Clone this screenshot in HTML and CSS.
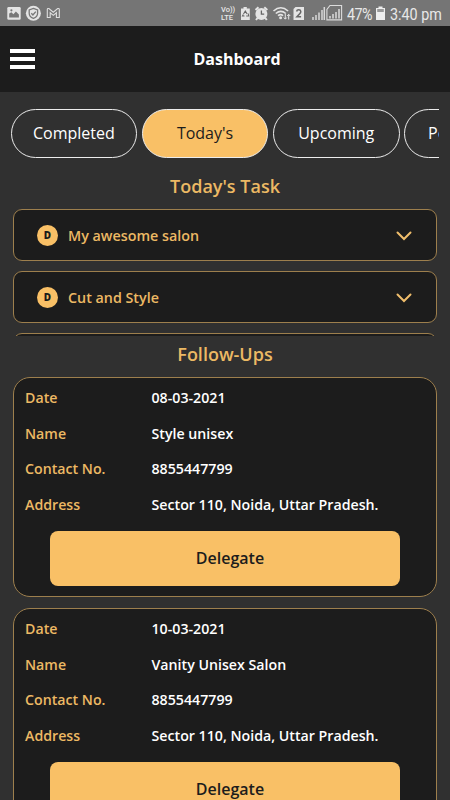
FILE: index.html
```html
<!DOCTYPE html>
<html lang="en">
<head>
<meta charset="utf-8">
<title>Dashboard</title>
<link rel="stylesheet" href="styles.css">
</head>
<body>
<div class="status">
  <svg class="status-left" width="70" height="26" viewBox="0 0 70 26">
    <rect x="7.3" y="7" width="13.4" height="12.7" rx="1.2" fill="#e4e4e4"/>
    <path d="M9.2 17.5v-4l2.2-1.3 2 2 2.5-2.8 3 3.2v2.900z" fill="#777"/>
    <circle cx="11.400" cy="10.300" r="1.100" fill="#777"/>
    <circle cx="33.400" cy="13.300" r="7.500" fill="#e4e4e4"/>
    <path d="M33.400 8.400l4.200 1.500v3.300c0 2.400-1.700 4.200-4.200 5.100-2.500-.9-4.200-2.700-4.200-5.100V9.900z" fill="#e4e4e4" stroke="#777" stroke-width="1.300"/>
    <path d="M31.300 13.300l1.600 1.600 2.900-3.300" fill="none" stroke="#777" stroke-width="1.400"/>
    <path d="M47.300 17.500V9.400q.2-1.200 1.600-.9l4.400 3.700 4.400-3.700q1.400-.3 1.600.9v8.100h-2.900v-4.700l-3.100 2.600-3.100-2.600v4.700z" fill="none" stroke="#dedede" stroke-width="1.100"/>
  </svg>
  <div class="status-right">
    <div class="volte"><span>Vo))</span><span>LTE</span></div>
    <svg width="105" height="26" viewBox="239 0 105 26">
      <path d="M241 8.500h2.500V7h3.300v1.500h3V20H241z" fill="#e4e4e4"/>
      <path d="M243.500 14l1.800-3 1.800 3M248.200 13.500l.5 2.500h-2.500M244.500 16h-2l.800-1.500" fill="none" stroke="#666" stroke-width="1.100"/>
      <circle cx="261.400" cy="14" r="6" fill="#e4e4e4"/>
      <path d="M255.500 10l3-2.800M267.300 10l-3-2.800M257.500 18l-1.500 2M265.300 18l1.500 2" stroke="#e4e4e4" stroke-width="2"/>
      <path d="M261.400 10.500v3.700h2.800" fill="none" stroke="#666" stroke-width="1.300"/>
      <g fill="none" stroke="#e4e4e4" stroke-width="1.600"><path d="M273.500 11q7.300-6.500 14.600 0M275.800 13.500q5-4.300 10 0M278 15.700q2.800-2.200 5 0"/></g>
      <circle cx="280.600" cy="17.800" r="1.500" fill="#e4e4e4"/>
      <path d="M285.300 14v5M283.800 17.500l1.500 1.700 1.500-1.700M288.700 19.500v-5M287.200 16l1.500-1.700 1.500 1.700" fill="none" stroke="#e4e4e4" stroke-width="1"/>
      <path d="M295.500 7h8.500v13h-10.500V9z" fill="#e4e4e4"/>
      <path d="M296.600 11.500q.3-1.700 2.100-1.700c2.700 0 2.500 2.600 1 4l-2.800 3h4.200" fill="none" stroke="#666" stroke-width="1.500"/>
      <path d="M313 17v3M316 15v5M319 12.500v7.500M322 10v10M324.300 7v13" stroke="#d8d8d8" stroke-width="1.500"/>
      <path d="M326.900 19.900V9.500l3.100-4h11.600v14.400z" fill="none" stroke="#dcdcdc" stroke-width="1.100"/>
      <path d="M330 16v2.500M333 14v4.500M336 12v6.500M339 9v9.500" stroke="#dcdcdc" stroke-width="1.500"/>
    </svg>
    <span class="percent">47%</span>
    <svg class="battery" width="9" height="26" viewBox="0 0 9 26"><path d="M0 8h2.500V6.500h4V8H9v12H0z" fill="#eee"/><path d="M1.200 9h6.600v3H1.200z" fill="#999"/></svg>
    <span class="clock">3:40 pm</span>
  </div>
</div>
<header class="header">
  <div class="burger"><i></i><i></i><i></i></div>
  <h1>Dashboard</h1>
</header>
<nav class="tabs">
  <div class="tab">Completed</div>
  <div class="tab active">Today's</div>
  <div class="tab">Upcoming</div>
  <div class="tab last">Pending</div>
</nav>
<h2 class="task-title">Today's Task</h2>
<section class="tasks">
  <div class="task"><b>D</b><span>My awesome salon</span><svg width="16" height="10" viewBox="0 0 16 10"><path d="M1.500 1.500L8 8l6.500-6.500"/></svg></div>
  <div class="task"><b>D</b><span>Cut and Style</span><svg width="16" height="10" viewBox="0 0 16 10"><path d="M1.500 1.500L8 8l6.500-6.500"/></svg></div>
  <div class="task"></div>
</section>
<h2 class="follow-title">Follow-Ups</h2>
<section class="follows">
  <article class="card">
    <dl>
      <dt>Date</dt><dd>08-03-2021</dd>
      <dt>Name</dt><dd>Style unisex</dd>
      <dt>Contact No.</dt><dd>8855447799</dd>
      <dt>Address</dt><dd>Sector 110, Noida, Uttar Pradesh.</dd>
    </dl>
    <div class="button">Delegate</div>
  </article>
  <article class="card">
    <dl>
      <dt>Date</dt><dd>10-03-2021</dd>
      <dt>Name</dt><dd>Vanity Unisex Salon</dd>
      <dt>Contact No.</dt><dd>8855447799</dd>
      <dt>Address</dt><dd>Sector 110, Noida, Uttar Pradesh.</dd>
    </dl>
    <div class="button">Delegate</div>
  </article>
</section>
</body>
</html>
```
FILE: styles.css
```css
* { box-sizing: border-box; margin: 0; padding: 0; }
body {
  width: 450px;
  height: 800px;
  overflow: hidden;
  background: #303030;
  color: #fff;
  font-family: "Open Sans", "Noto Sans", sans-serif;
  display: flex;
  flex-direction: column;
}
body > * { flex-shrink: 0; }
svg { display: block; flex-shrink: 0; }
.status {
  height: 26px;
  background: #757575;
  display: flex;
  justify-content: space-between;
  color: #e8e8e8;
  font-family: Roboto, sans-serif;
}
.status-right { display: flex; width: 229px; align-items: center; }
.volte { width: 18px; font-size: 7.500px; line-height: 7.500px; font-weight: 500; padding-top: 1px; }
.volte span { display: block; }
.percent, .clock {
  font-size: 16.500px;
  white-space: nowrap;
  padding-top: 2px;
  transform: scaleX(.87);
  transform-origin: left;
}
.percent { width: 30px; margin-left: 3px; letter-spacing: -0.700px; }
.clock { margin-left: 5px; }
.header {
  height: 66px;
  background: #1c1c1c;
  display: grid;
  grid-template-columns: 35px 1fr 11px;
  align-items: center;
}
.burger { display: flex; flex-direction: column; gap: 4px; padding-left: 10px; }
.burger i { height: 4px; background: #fff; }
.header h1 { font-size: 16px; font-weight: 700; line-height: 24px; text-align: center; }
.tabs {
  display: flex;
  gap: 4.500px;
  margin: 17px 11px 0 10.500px;
  overflow: hidden;
  height: 49px;
}
.tab {
  flex: 0 0 126.700px;
  height: 49px;
  border: 1px solid #ececec;
  border-radius: 25px;
  font-size: 16px;
  line-height: 47px;
  text-align: center;
}
.last { text-align: left; padding-left: 23px; }
.active { background: #f9c066; color: #1c1c1c; }
h2 { text-align: center; color: #ecb964; font-size: 18px; font-weight: 600; }
.task-title { height: 51px; line-height: 57px; }
.tasks {
  height: 127px;
  margin: 0 13px;
  overflow: hidden;
  display: flex;
  flex-direction: column;
  gap: 10px;
}
.task {
  flex: 0 0 52px;
  border: 1px solid #9d7f4d;
  border-radius: 9px;
  background: #1c1c1c;
  color: #ecb964;
  display: flex;
  align-items: center;
  padding: 0 24px 0 23px;
  font-size: 14.300px;
  font-weight: 600;
}
.task b {
  width: 21px;
  height: 21px;
  border-radius: 50%;
  background: #f9c066;
  color: #1c1c1c;
  font-size: 10px;
  line-height: 21px;
  text-align: center;
  margin-right: 10px;
}
.task svg { margin: 2px 0 0 auto; fill: none; stroke: #f0be6c; stroke-width: 2; stroke-linecap: round; }
.follow-title { height: 40.500px; line-height: 36px; }
.follows { margin: 0 13px; display: flex; flex-direction: column; gap: 10.500px; }
.card {
  height: 220.500px;
  border: 1px solid #9d7f4d;
  border-radius: 17px;
  background: #1c1c1c;
  padding: 2px 11px 0;
}
dl {
  display: grid;
  grid-template-columns: 126.500px 1fr;
  grid-auto-rows: 35.700px;
  align-items: center;
  font-size: 14.200px;
  font-weight: 600;
  white-space: nowrap;
}
dt { color: #ecb964; }
.button {
  height: 55px;
  margin: 8.600px 25px 0;
  padding-left: 10px;
  border-radius: 8px;
  background: #f9c066;
  color: #1c1c1c;
  font-size: 16px;
  font-weight: 600;
  line-height: 55px;
  text-align: center;
}
```
